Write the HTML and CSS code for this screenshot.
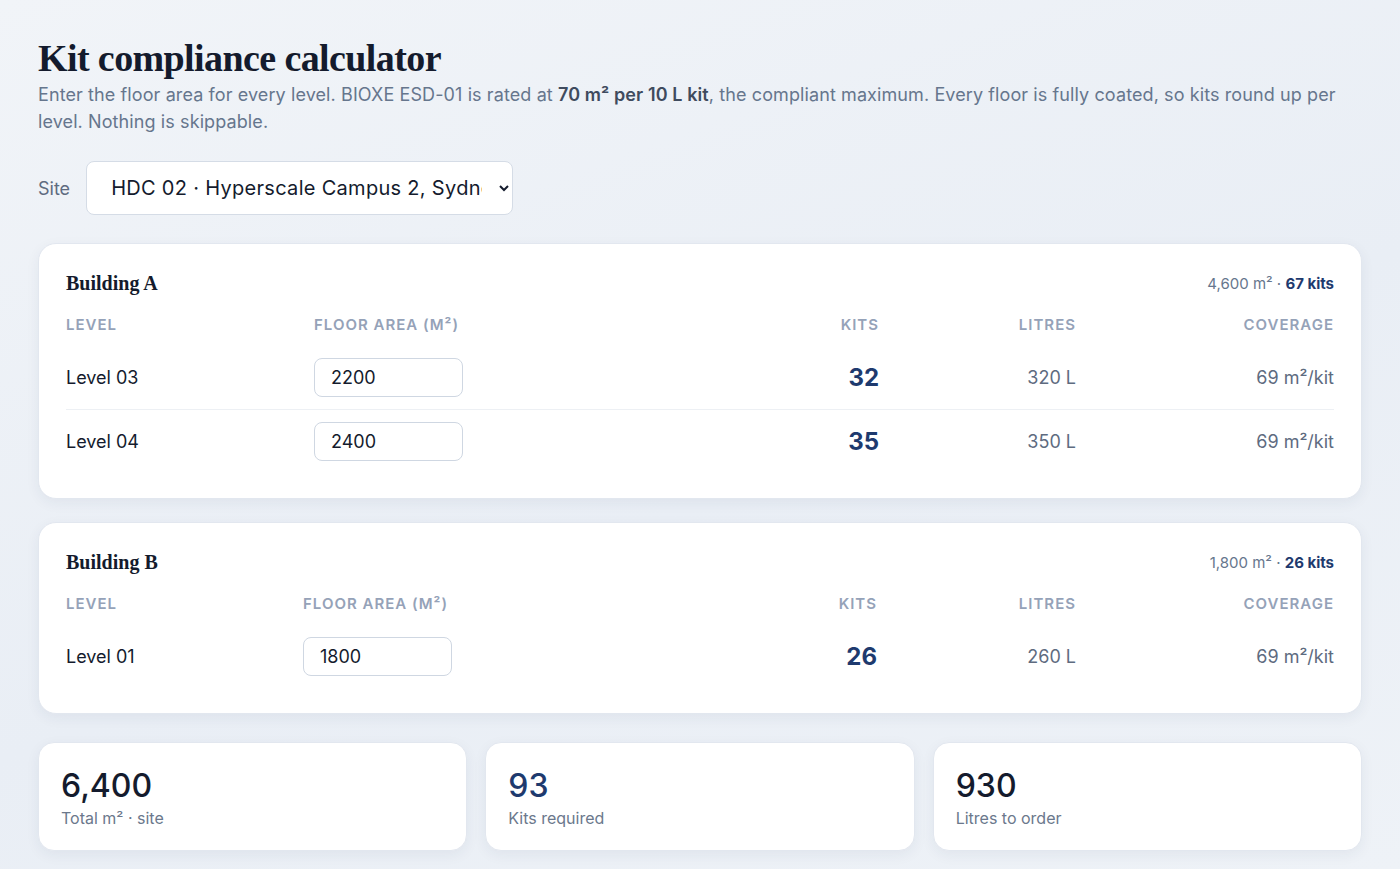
FILE: index.html
```html
<!DOCTYPE html>
<html lang="en">
<head>
    <meta charset="utf-8">
    <title>Kit compliance calculator</title>
    <link rel="stylesheet" href="styles.css">
</head>
<body>
    <h1 class="page-title">Kit compliance calculator</h1>
    <p class="intro">Enter the floor area for every level. BIOXE ESD-01 is rated at <strong>70 m² per 10 L kit</strong>, the compliant maximum. Every floor is fully coated, so kits round up per level. Nothing is skippable.</p>

    <div class="site-row">
        <label for="site-select">Site</label>
        <select id="site-select" class="site-select">
            <option>HDC 02 · Hyperscale Campus 2, Sydney</option>
        </select>
    </div>

    <!-- Building A -->
    <section class="building-card">
        <div class="building-head">
            <h2 class="building-title">Building A</h2>
            <div class="building-sum">4,600 m² · <strong>67 kits</strong></div>
        </div>
        <table class="level-table">
            <colgroup>
                <col class="col-level">
                <col class="col-area">
                <col class="col-kits">
                <col class="col-litres">
                <col class="col-cover">
            </colgroup>
            <thead>
                <tr>
                    <th>Level</th>
                    <th>Floor area (m²)</th>
                    <th class="num">Kits</th>
                    <th class="num">Litres</th>
                    <th class="num">Coverage</th>
                </tr>
            </thead>
            <tbody>
                <tr>
                    <td class="level-name">Level 03</td>
                    <td><input class="area-input" type="text" value="2200"></td>
                    <td class="num kits">32</td>
                    <td class="num litres">320 L</td>
                    <td class="num cover">69 m²/kit</td>
                </tr>
                <tr>
                    <td class="level-name">Level 04</td>
                    <td><input class="area-input" type="text" value="2400"></td>
                    <td class="num kits">35</td>
                    <td class="num litres">350 L</td>
                    <td class="num cover">69 m²/kit</td>
                </tr>
            </tbody>
        </table>
    </section>

    <!-- Building B -->
    <section class="building-card">
        <div class="building-head">
            <h2 class="building-title">Building B</h2>
            <div class="building-sum">1,800 m² · <strong>26 kits</strong></div>
        </div>
        <table class="level-table table-b">
            <colgroup>
                <col class="col-level">
                <col class="col-area">
                <col class="col-kits">
                <col class="col-litres">
                <col class="col-cover">
            </colgroup>
            <thead>
                <tr>
                    <th>Level</th>
                    <th>Floor area (m²)</th>
                    <th class="num">Kits</th>
                    <th class="num">Litres</th>
                    <th class="num">Coverage</th>
                </tr>
            </thead>
            <tbody>
                <tr>
                    <td class="level-name">Level 01</td>
                    <td><input class="area-input" type="text" value="1800"></td>
                    <td class="num kits">26</td>
                    <td class="num litres">260 L</td>
                    <td class="num cover">69 m²/kit</td>
                </tr>
            </tbody>
        </table>
    </section>

    <!-- totals -->
    <div class="stats">
        <div class="stat-card">
            <div class="stat-value">6,400</div>
            <div class="stat-label">Total m² · site</div>
        </div>
        <div class="stat-card">
            <div class="stat-value accent">93</div>
            <div class="stat-label">Kits required</div>
        </div>
        <div class="stat-card">
            <div class="stat-value">930</div>
            <div class="stat-label">Litres to order</div>
        </div>
    </div>
</body>
</html>
```

FILE: styles.css
```css
body {
    margin: 0;
    padding: 36px 38px 20px;
    font-family: Inter, "Open Sans", sans-serif;
    color: #141b2d;
    background: linear-gradient(160deg, #f1f4f8 0%, #e9eef5 55%, #eef2f7 100%);
    min-height: 100vh;
    box-sizing: border-box;
}
.page-title {
    font-family: "Liberation Serif", "DejaVu Serif", serif;
    font-size: 38px;
    font-weight: bold;
    letter-spacing: -0.6px;
    margin: 0;
    line-height: 44px;
    color: #141b2d;
}
.intro {
    margin: 1px 0 0;
    font-size: 18px;
    line-height: 27px;
    color: #66768d;
    letter-spacing: 0.1px;
}
.intro strong {
    color: #3f4b5e;
    font-weight: 600;
}
.site-row {
    display: flex;
    align-items: center;
    gap: 16px;
    margin: 26px 0 28px;
}
.site-row label {
    font-size: 18px;
    color: #5e6b80;
}
.site-select {
    width: 427px;
    height: 54px;
    padding: 0 14px 0 20px;
    font-family: Inter, "Open Sans", sans-serif;
    font-size: 20px;
    letter-spacing: 0.3px;
    color: #141b2d;
    background: #fff;
    border: 1px solid #d5dce6;
    border-radius: 8px;
}
.building-card {
    background: #fff;
    border: 1px solid #e2e7ef;
    border-radius: 18px;
    padding: 28px 27px 25px;
    margin-bottom: 23px;
    box-shadow: 0 4px 14px rgba(30, 50, 90, 0.06);
}
.building-head {
    display: flex;
    justify-content: space-between;
    align-items: center;
    margin-bottom: 14px;
}
.building-title {
    font-family: "Liberation Serif", "DejaVu Serif", serif;
    font-size: 20px;
    font-weight: bold;
    margin: 0;
    color: #141b2d;
}
.building-sum {
    font-size: 15px;
    color: #66768d;
}
.building-sum strong {
    color: #1e3a6e;
    font-weight: 700;
}
.level-table {
    width: 100%;
    border-collapse: collapse;
    table-layout: fixed;
}
.col-level { width: 248px; }
.col-area { width: auto; }
.col-kits { width: 140px; }
.col-litres { width: 197px; }
.col-cover { width: 258px; }
.table-b .col-level { width: 237px; }
.table-b .col-litres { width: 199px; }
.level-table th {
    text-align: left;
    font-size: 15px;
    font-weight: 600;
    letter-spacing: 1px;
    text-transform: uppercase;
    color: #95a2b8;
    padding: 6px 0 12px;
}
.level-table td {
    padding: 12px 0;
    font-size: 18px;
}
.level-table tbody tr + tr td {
    border-top: 1px solid #edf0f4;
}
.level-table .num {
    text-align: right;
}
.level-name {
    color: #141b2d;
}
.area-input {
    width: 149px;
    height: 39px;
    box-sizing: border-box;
    padding: 0 16px;
    font-family: Inter, "Open Sans", sans-serif;
    font-size: 18px;
    color: #141b2d;
    border: 1px solid #cfd7e2;
    border-radius: 8px;
    display: block;
}
.kits {
    font-size: 24px !important;
    font-weight: 700;
    color: #1e3a6e;
}
.litres,
.cover {
    color: #5e6b80;
}
.stats {
    display: grid;
    grid-template-columns: 1fr 1fr 1fr;
    gap: 18px;
    margin-top: 28px;
}
.stat-card {
    background: #fff;
    border: 1px solid #e2e7ef;
    border-radius: 16px;
    padding: 24px 22px 22px;
    box-shadow: 0 4px 14px rgba(30, 50, 90, 0.06);
}
.stat-value {
    font-size: 32px;
    font-weight: 500;
    line-height: 38px;
    color: #141b2d;
}
.stat-value.accent {
    color: #1e3a6e;
}
.stat-label {
    margin-top: 3px;
    font-size: 16px;
    color: #6b788c;
}
```
